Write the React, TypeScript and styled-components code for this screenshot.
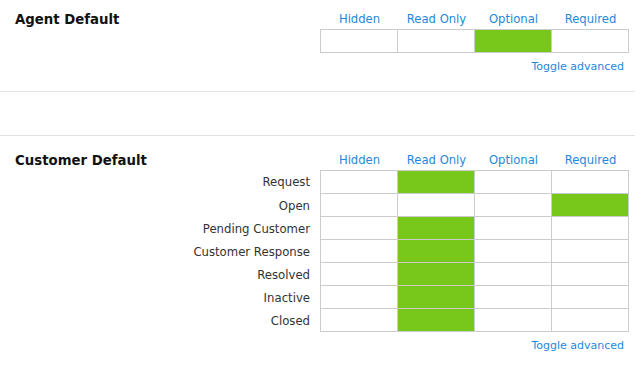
import styled, { createGlobalStyle } from 'styled-components';

const GlobalStyle = createGlobalStyle`
  body {
    margin: 0;
    background: #fff;
    font-family: "DejaVu Sans", Verdana, sans-serif;
  }
`;

const COLUMNS = ['Hidden', 'Read Only', 'Optional', 'Required'];

type Row = { label: string; value: number };

const agentRows: Row[] = [{ label: '', value: 2 }];

const customerRows: Row[] = [
  { label: 'Request', value: 1 },
  { label: 'Open', value: 3 },
  { label: 'Pending Customer', value: 1 },
  { label: 'Customer Response', value: 1 },
  { label: 'Resolved', value: 1 },
  { label: 'Inactive', value: 1 },
  { label: 'Closed', value: 1 },
];

const PermissionSection = ({ title, rows, top }: { title: string; rows: Row[]; top: number }) => (
  <Section $top={top}>
    <HeaderRow>
      <Title>{title}</Title>
      <ColumnHeads>
        {COLUMNS.map((c) => (
          <ColumnHead key={c}>{c}</ColumnHead>
        ))}
      </ColumnHeads>
    </HeaderRow>
    {rows.map((row, i) => (
      <MatrixRow key={i}>
        <RowLabel>{row.label}</RowLabel>
        <Cells $first={i === 0}>
          {COLUMNS.map((c, j) => (
            <Cell key={c} $active={row.value === j} />
          ))}
        </Cells>
      </MatrixRow>
    ))}
    <ToggleRow>
      <ToggleLink href="#">Toggle advanced</ToggleLink>
    </ToggleRow>
  </Section>
);

const App = () => (
  <>
    <GlobalStyle />
    <Page>
      <PermissionSection title="Agent Default" rows={agentRows} top={7} />
      <Spacer />
      <PermissionSection title="Customer Default" rows={customerRows} top={12} />
    </Page>
  </>
);

const Page = styled.div`
  width: 635px;
`;

const Section = styled.div<{ $top: number }>`
  box-sizing: border-box;
  padding: ${(p) => p.$top}px 6px 17px 15px;
  border-bottom: 1px solid #e2e2e2;

  &:last-child {
    border-bottom: none;
  }
`;

const Spacer = styled.div`
  height: 43px;
  border-bottom: 1px solid #e2e2e2;
`;

const HeaderRow = styled.div`
  display: flex;
  align-items: center;
  box-sizing: border-box;
  height: 22px;
  padding-top: 2px;
`;

const Title = styled.h2`
  flex: 1;
  margin: 0;
  font-size: 13.3px;
  font-weight: bold;
  color: #111;
`;

const ColumnHeads = styled.div`
  display: grid;
  grid-template-columns: repeat(4, 77px);
  padding-left: 1px;
`;

const ColumnHead = styled.span`
  text-align: center;
  font-size: 11.6px;
  color: #1e88dc;
`;

const MatrixRow = styled.div`
  display: flex;
`;

const RowLabel = styled.div`
  flex: 1;
  box-sizing: border-box;
  height: 23px;
  text-align: right;
  padding: 1px 10px 0 0;
  font-size: 11.7px;
  line-height: 22px;
  color: #333;
`;

const Cells = styled.div<{ $first: boolean }>`
  display: grid;
  grid-template-columns: repeat(4, 77px);
  align-self: flex-start;
  border-left: 1px solid #cccccc;
  border-top: ${(p) => (p.$first ? '1px solid #cccccc' : 'none')};
`;

const Cell = styled.div<{ $active: boolean }>`
  box-sizing: border-box;
  height: 23px;
  border-right: 1px solid #cccccc;
  border-bottom: 1px solid #cccccc;
  background: ${(p) => (p.$active ? '#77c81a' : '#fff')};
`;

const ToggleRow = styled.div`
  display: flex;
  justify-content: flex-end;
  margin-top: 7px;
  padding-right: 5px;
  line-height: 14px;
`;

const ToggleLink = styled.a`
  font-size: 11px;
  color: #1e88dc;
  text-decoration: none;
`;

export default App;
